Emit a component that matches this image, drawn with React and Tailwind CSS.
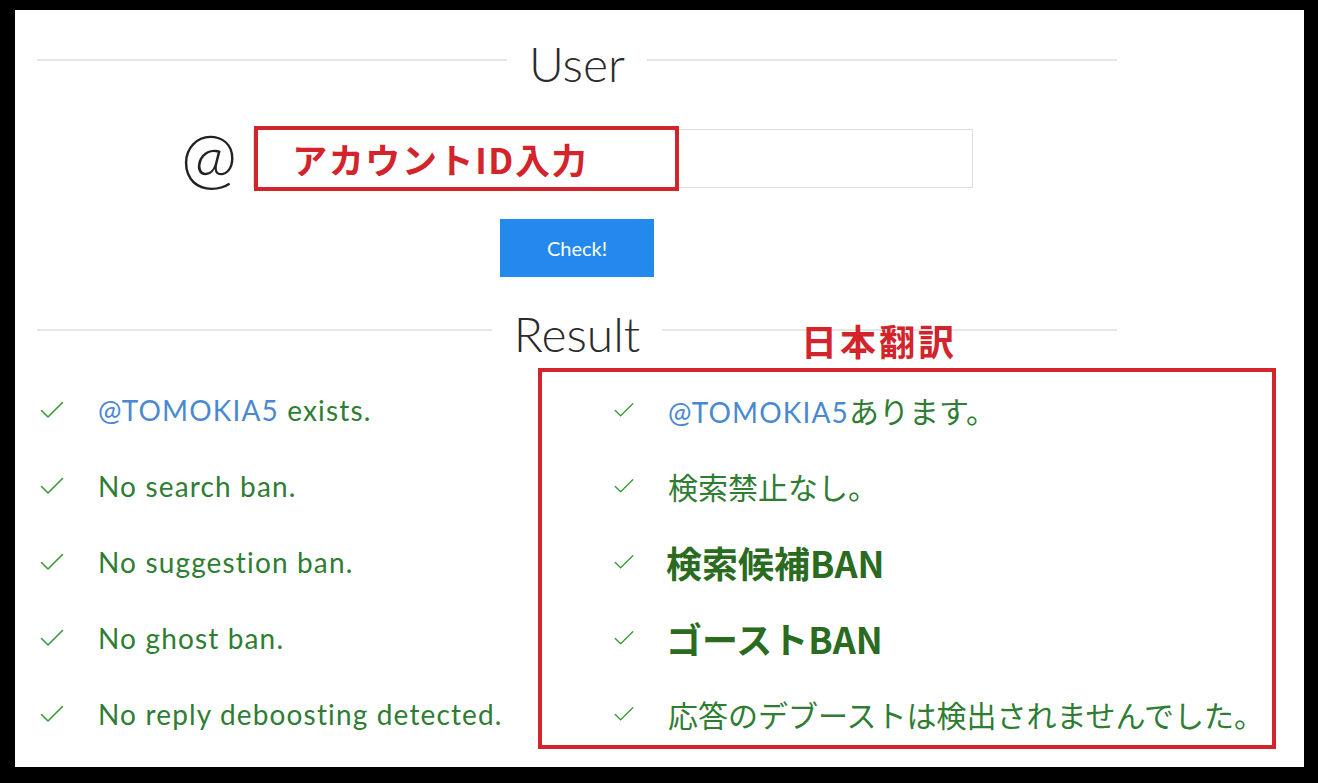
import React from "react";

function Check({ className }) {
  return (
    <svg viewBox="0 0 24 18" className={className} fill="none" stroke="currentColor" strokeWidth="1.6" strokeLinecap="round" strokeLinejoin="round">
      <path d="M1.5 9.5 L8 16 L22.5 1.5" />
    </svg>
  );
}

function Heading({ children }) {
  return (
    <div className="flex items-center h-[60px]">
      <div className="flex-1 h-[2px] bg-[#e6e6e6]" />
      <span className="px-[22px] pt-[8px] text-[48px] font-light leading-none text-[#2b2b2b]">{children}</span>
      <div className="flex-1 h-[2px] bg-[#e6e6e6]" />
    </div>
  );
}

const english = [
  { user: "@TOMOKIA5", text: " exists." },
  { text: "No search ban." },
  { text: "No suggestion ban." },
  { text: "No ghost ban." },
  { text: "No reply deboosting detected." },
];

const japanese = [
  { user: "@TOMOKIA5", text: "あります。" },
  { text: "検索禁止なし。" },
  { text: "検索候補BAN", bold: true },
  { text: "ゴーストBAN", bold: true },
  { text: "応答のデブーストは検出されませんでした。" },
];

export default function App() {
  return (
    <div className="w-[1318px] h-[783px] bg-black pt-[10px] pl-[15px]">
      <div className="w-[1289px] h-[757px] bg-white pl-[22px] pt-[20px] font-['Lato','Noto_Sans_CJK_JP',sans-serif]">
        <div className="w-[1080px]">
          <Heading>User</Heading>

          {/* account input */}
          <div className="mt-[39px] flex justify-center items-center gap-[16px]">
            <span className="h-[59px] flex items-center text-[68px] font-light leading-none text-[#222] pb-[6px]">@</span>
            <div className="relative w-[720px] h-[59px] border border-[#dedede] bg-white">
              <div className="absolute left-0 -top-[4px] w-[425px] h-[65px] border-4 border-[#d3232b] flex items-center pl-[34px]">
                <span className="font-['Noto_Sans_CJK_JP',sans-serif] font-bold text-[35px] tracking-[1.6px] leading-none text-[#d3232b]">アカウントID入力</span>
              </div>
            </div>
          </div>

          <div className="mt-[31px] flex justify-center">
            <button className="w-[154px] h-[58px] bg-[#2389ec] text-white text-[20px] leading-none">Check!</button>
          </div>

          <div className="mt-[23px]">
            <Heading>Result</Heading>
          </div>

          {/* results */}
          <div className="mt-[8px] flex">
            <div className="w-[501px] shrink-0 pl-[3px] pt-[4px]">
              {english.map((r, i) => (
                <div key={i} className="h-[76px] flex items-center">
                  <Check className="w-[24px] h-[18px] text-[#3a9a3a] shrink-0" />
                  <span className="ml-[34px] text-[28px] tracking-[1.15px] leading-none text-[#2e7d32] whitespace-nowrap">
                    {r.user && <span className="text-[#4a89d0]">{r.user}</span>}
                    {r.text}
                  </span>
                </div>
              ))}
            </div>

            <div className="relative w-[738px] shrink-0 h-[381px] border-4 border-[#d3232b] pl-[72px]">
              <span className="absolute left-[259px] -top-[50px] font-['Noto_Sans_CJK_JP',sans-serif] font-bold text-[36px] leading-none tracking-[3px] text-[#d3232b]">日本翻訳</span>
              {japanese.map((r, i) => (
                <div key={i} className="h-[76px] flex items-center">
                  <Check className="w-[20px] h-[16px] text-[#3a9a3a] shrink-0" />
                  <span
                    className={
                      r.bold
                        ? "ml-[32px] font-['Noto_Sans_CJK_JP',sans-serif] font-bold text-[36px] leading-none text-[#2a6b1f] whitespace-nowrap"
                        : "ml-[34px] font-['Noto_Sans_CJK_JP',sans-serif] text-[30px] leading-none text-[#2e7d32] whitespace-nowrap"
                    }
                  >
                    {r.user && <span className="font-['Lato',sans-serif] text-[28px] tracking-[1.15px] text-[#4a89d0]">{r.user}</span>}
                    {r.text}
                  </span>
                </div>
              ))}
            </div>
          </div>
        </div>
      </div>
    </div>
  );
}
